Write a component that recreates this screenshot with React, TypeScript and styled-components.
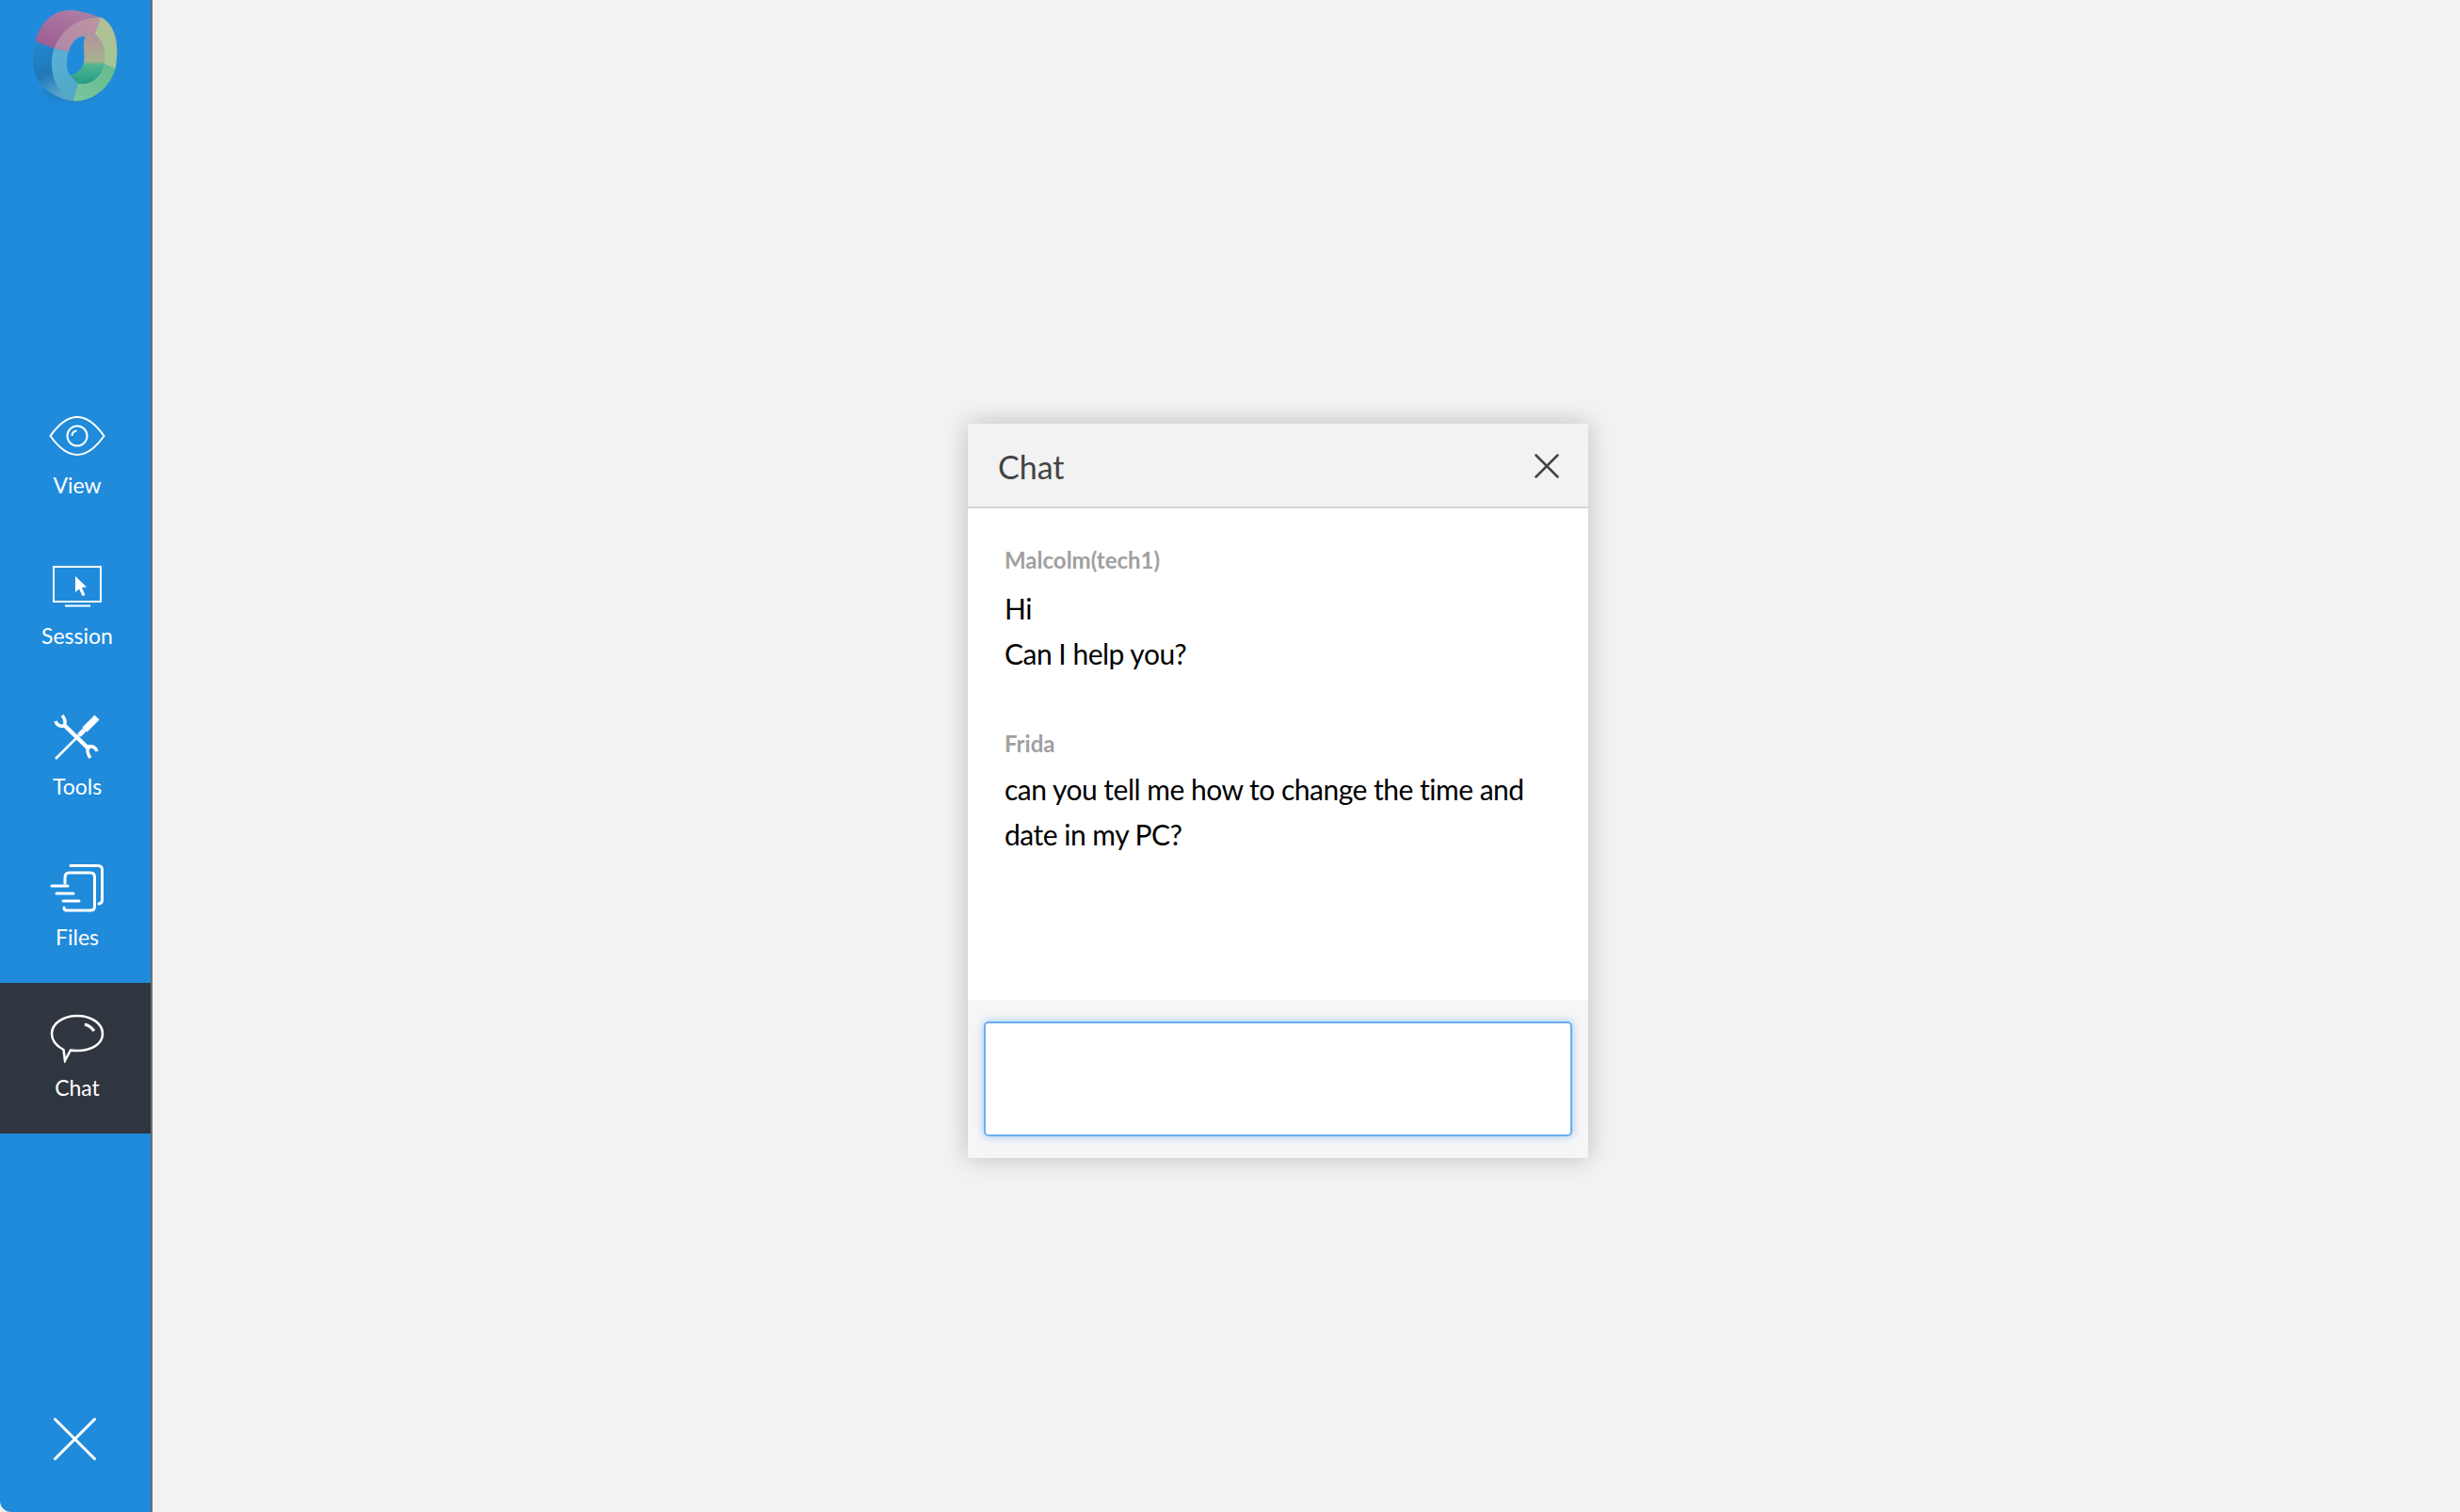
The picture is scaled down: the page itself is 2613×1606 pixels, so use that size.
import React from "react";
import styled, { createGlobalStyle } from "styled-components";

const GlobalStyle = createGlobalStyle`
  html, body {
    margin: 0;
    padding: 0;
    background: #f2f2f2;
    font-family: Lato, "Open Sans", sans-serif;
  }
`;

const Page = styled.div`
  display: flex;
  width: 2613px;
  height: 1606px;
  overflow: hidden;
  background-color: #f2f2f2;
`;

const Sidebar = styled.nav`
  display: flex;
  flex-flow: column nowrap;
  flex: 0 0 160px;
  height: 100%;
  background-color: #208bdb;
  border-right: 2px solid #6b6f73;
  border-bottom-left-radius: 12px;
`;

const LogoBox = styled.div`
  flex: 0 0 404px;

  & > svg {
    display: block;
  }
`;

const NavItem = styled.div<{ $active?: boolean }>`
  display: flex;
  flex-flow: column nowrap;
  align-items: center;
  box-sizing: border-box;
  height: 160px;
  padding: 30px 0 0 4px;
  color: #fff;
  background-color: ${(p) => (p.$active ? "#30363f" : "transparent")};
`;

const IconBox = styled.div`
  display: flex;
  align-items: center;
  justify-content: center;
  height: 58px;
`;

const NavLabel = styled.span`
  font-size: 23px;
  line-height: 46px;
`;

const QuitButton = styled.div`
  display: flex;
  margin-top: auto;
  height: 142px;
  padding: 0 0 0 57px;
  align-items: flex-start;

  & > svg {
    margin-top: 42px;
  }
`;

const Main = styled.main`
  flex: 1;
  padding: 450px 0 0 866px;
`;

const ChatWindow = styled.section`
  display: flex;
  flex-flow: column nowrap;
  width: 659px;
  height: 780px;
  box-shadow: 0 0 24px rgba(0, 0, 0, 0.22);
`;

const WindowHeader = styled.header`
  display: flex;
  flex: 0 0 90px;
  align-items: center;
  justify-content: space-between;
  padding: 2px 31px 0 32px;
  box-sizing: border-box;
  background-color: #f2f2f2;
  border-bottom: 2px solid #d6d6d6;
`;

const WindowTitle = styled.h2`
  margin: 0;
  font-size: 34px;
  font-weight: 400;
  color: #444;
`;

const Messages = styled.div`
  flex: 1;
  padding: 37px 39px 0;
  background-color: #fff;
`;

const Sender = styled.div`
  font-size: 24px;
  line-height: 36px;
  font-weight: 700;
  color: #a0a0a0;
  margin-bottom: 9px;
`;

const Message = styled.div`
  margin-bottom: 54px;

  & + & ${Sender} {
    margin-bottom: 6px;
  }
`;

const MessageLine = styled.div`
  font-size: 30px;
  line-height: 48px;
  letter-spacing: -0.5px;
  color: #000;
`;

const Composer = styled.div`
  flex: 0 0 168px;
  box-sizing: border-box;
  padding: 23px 17px 23px;
  background-color: #f6f6f6;
`;

const ComposerInput = styled.textarea`
  display: block;
  box-sizing: border-box;
  width: 100%;
  height: 122px;
  resize: none;
  outline: none;
  background: #fff;
  border: 2px solid #6aaef0;
  border-radius: 5px;
  box-shadow: 0 0 10px rgba(74, 158, 240, 0.55);
`;

const Logo = () => (
  <svg width="160" height="130" viewBox="0 0 480 390">
    <defs>
      <linearGradient id="purple" x1="0" y1="1" x2="0.6" y2="0">
        <stop offset="0" stopColor="#9a5a90" />
        <stop offset="1" stopColor="#ad7ca4" />
      </linearGradient>
      <linearGradient id="blue" x1="0" y1="0" x2="0.3" y2="1">
        <stop offset="0" stopColor="#2389cf" />
        <stop offset="0.6" stopColor="#1f78b8" />
        <stop offset="1" stopColor="#5ba4c8" />
      </linearGradient>
      <linearGradient id="pink" x1="0" y1="1" x2="1" y2="0">
        <stop offset="0" stopColor="#ad87a8" />
        <stop offset="1" stopColor="#c0949f" />
      </linearGradient>
      <linearGradient id="lime" x1="0" y1="0" x2="0" y2="1">
        <stop offset="0" stopColor="#b4bd96" />
        <stop offset="1" stopColor="#a3c892" />
      </linearGradient>
      <linearGradient id="green" x1="1" y1="0" x2="0" y2="1">
        <stop offset="0" stopColor="#62bd8a" />
        <stop offset="1" stopColor="#7cc59e" />
      </linearGradient>
      <linearGradient id="sky" x1="0" y1="0" x2="0.5" y2="1">
        <stop offset="0" stopColor="#5ab0d8" />
        <stop offset="1" stopColor="#52a8c6" />
      </linearGradient>
      <linearGradient id="wall" x1="0" y1="0" x2="0" y2="1">
        <stop offset="0" stopColor="#b5929e" />
        <stop offset="0.55" stopColor="#a6b38c" />
        <stop offset="0.62" stopColor="#52b492" />
        <stop offset="1" stopColor="#259c84" />
      </linearGradient>
      <filter id="soft">
        <feGaussianBlur stdDeviation="6" />
      </filter>
    </defs>
    <ellipse cx="225" cy="295" rx="85" ry="32" fill="#1a6fb0" opacity="0.35" filter="url(#soft)" />
    <path d="M113 132C125 75 170 30 225 32C255 33 290 45 320 55C265 48 205 90 172 155Z" fill="url(#purple)" />
    <path d="M113 132L172 155C155 210 175 280 232 322C200 320 165 300 140 280C108 250 95 190 113 132Z" fill="url(#blue)" />
    <path d="M172 155C195 95 255 50 320 55L302 110C265 100 228 125 218 165Z" fill="url(#pink)" />
    <path d="M320 55C358 70 385 125 368 218L332 205C338 165 325 125 302 110Z" fill="url(#lime)" />
    <path d="M368 218C350 280 295 325 232 322L248 265C285 275 320 250 332 205Z" fill="url(#green)" />
    <path d="M232 322C180 295 150 225 172 155L218 165C208 205 220 245 248 265Z" fill="url(#sky)" />
    <path d="M218 165C228 125 265 100 302 110C325 125 338 165 332 205C320 250 285 275 248 265C220 245 208 205 218 165Z" fill="url(#wall)" />
    <path d="M218 165C228 132 250 112 272 118C262 135 270 165 268 190C268 215 245 238 222 240C210 220 211 190 218 165Z" fill="#208bdb" />
  </svg>
);

const EyeIcon = () => (
  <svg width="60" height="44" viewBox="0 0 60 44" fill="none" stroke="#fff" strokeWidth="2">
    <path d="M1.500 22C10 10 19 2 30 2C41 2 50 10 58.500 22C50 34 41 42 30 42C19 42 10 34 1.500 22Z" />
    <circle cx="30" cy="22" r="10.500" />
    <path d="M24.500 22C24.500 19 26.500 17 29.500 16.500" />
  </svg>
);

const SessionIcon = () => (
  <svg width="54" height="44" viewBox="0 0 54 44" fill="none" stroke="#fff" strokeWidth="2">
    <rect x="2" y="1" width="50" height="37" />
    <path d="M14 42.500H41" />
    <path d="M25 11L37 22.500L32 23L35.500 31L32.500 32L29 24.500L25 28Z" fill="#fff" stroke="none" />
  </svg>
);

const ToolsIcon = () => (
  <svg width="50" height="50" viewBox="0 0 50 50" fill="none" stroke="#fff">
    <path d="M2 48L27 23" strokeWidth="2.500" />
    <path d="M27 23L33 17" strokeWidth="5" />
    <path d="M33 17L46 4" strokeWidth="7" />
    <path d="M11 12L38 38" strokeWidth="4.500" />
    <path d="M2 8C3 12 7 14 11 13C13 10 12 5 9 2" strokeWidth="3.500" />
    <path d="M46 40C45 36 41 34 37 35C35 38 36 43 39 47" strokeWidth="3.500" />
  </svg>
);

const FilesIcon = () => (
  <svg width="58" height="52" viewBox="0 0 58 52" fill="none" stroke="#fff" strokeWidth="3" strokeLinecap="round">
    <path d="M22 2.500H51C54 2.500 55.500 4 55.500 7V39C55.500 41 54.500 42.500 52 43" />
    <path d="M16 21V15C16 12 17.500 10 20.500 10H43C46 10 47.500 11.500 47.500 14.500V46C47.500 49 46 50 43 50H18C16 50 15 49 15 47" />
    <path d="M2 24H19" />
    <path d="M7 32H25" />
    <path d="M14 40H31" />
  </svg>
);

const ChatIcon = () => (
  <svg width="58" height="52" viewBox="0 0 58 52" fill="none" stroke="#fff" strokeWidth="2.500">
    <path d="M29 2C44 2 56 10 56 21C56 32 44 39 29 39C26 39 24 39 22 38.500L16 49.500L14.500 38C7 34 2 28 2 21C2 10 14 2 29 2Z" />
    <path d="M37 11C41 12 44 14 47 18" strokeWidth="3" />
  </svg>
);

const CloseIcon = ({ size, width, color }: { size: number; width: number; color: string }) => (
  <svg width={size} height={size} viewBox={`0 0 ${size} ${size}`} stroke={color} strokeWidth={width} strokeLinecap="round">
    <path d={`M1.500 1.500L${size - 1.5} ${size - 1.5}M${size - 1.5} 1.500L1.500 ${size - 1.5}`} />
  </svg>
);

const navItems = [
  { label: "View", icon: <EyeIcon /> },
  { label: "Session", icon: <SessionIcon /> },
  { label: "Tools", icon: <ToolsIcon /> },
  { label: "Files", icon: <FilesIcon /> },
  { label: "Chat", icon: <ChatIcon />, active: true },
];

const App: React.FC = () => {
  return (
    <Page>
      <GlobalStyle />
      <Sidebar>
        <LogoBox>
          <Logo />
        </LogoBox>
        {navItems.map((item) => (
          <NavItem key={item.label} $active={item.active}>
            <IconBox>{item.icon}</IconBox>
            <NavLabel>{item.label}</NavLabel>
          </NavItem>
        ))}
        <QuitButton>
          <CloseIcon size={45} width={3} color="#fff" />
        </QuitButton>
      </Sidebar>
      <Main>
        <ChatWindow>
          <WindowHeader>
            <WindowTitle>Chat</WindowTitle>
            <CloseIcon size={26} width={2.5} color="#444" />
          </WindowHeader>
          <Messages>
            <Message>
              <Sender>Malcolm(tech1)</Sender>
              <MessageLine>Hi</MessageLine>
              <MessageLine>Can I help you?</MessageLine>
            </Message>
            <Message>
              <Sender>Frida</Sender>
              <MessageLine>can you tell me how to change the time and date in my PC?</MessageLine>
            </Message>
          </Messages>
          <Composer>
            <ComposerInput />
          </Composer>
        </ChatWindow>
      </Main>
    </Page>
  );
};

export default App;
